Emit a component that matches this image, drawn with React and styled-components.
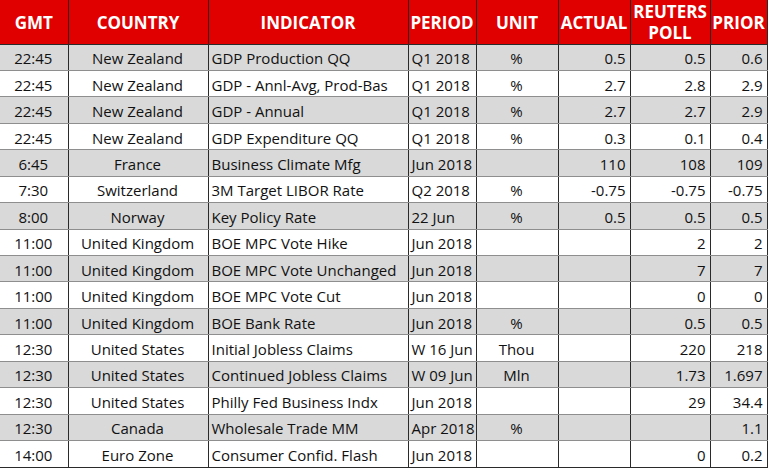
import React from 'react';
import styled, { createGlobalStyle } from 'styled-components';

const GlobalStyle = createGlobalStyle`
  html, body {
    margin: 0;
    padding: 0;
    background: #fff;
  }
`;

const columns = [
  { key: 'gmt', label: 'GMT', width: 68, align: 'center' },
  { key: 'country', label: 'COUNTRY', width: 140, align: 'center' },
  { key: 'indicator', label: 'INDICATOR', width: 200, align: 'left' },
  { key: 'period', label: 'PERIOD', width: 68, align: 'left' },
  { key: 'unit', label: 'UNIT', width: 82, align: 'center' },
  { key: 'actual', label: 'ACTUAL', width: 72, align: 'right' },
  { key: 'poll', label: ['REUTERS', 'POLL'], width: 80, align: 'right' },
  { key: 'prior', label: 'PRIOR', width: 57, align: 'right' },
];

const rows = [
  ['22:45', 'New Zealand', 'GDP Production QQ', 'Q1 2018', '%', '0.5', '0.5', '0.6'],
  ['22:45', 'New Zealand', 'GDP - Annl-Avg, Prod-Bas', 'Q1 2018', '%', '2.7', '2.8', '2.9'],
  ['22:45', 'New Zealand', 'GDP - Annual', 'Q1 2018', '%', '2.7', '2.7', '2.9'],
  ['22:45', 'New Zealand', 'GDP Expenditure QQ', 'Q1 2018', '%', '0.3', '0.1', '0.4'],
  ['6:45', 'France', 'Business Climate Mfg', 'Jun 2018', '', '110', '108', '109'],
  ['7:30', 'Switzerland', '3M Target LIBOR Rate', 'Q2 2018', '%', '-0.75', '-0.75', '-0.75'],
  ['8:00', 'Norway', 'Key Policy Rate', '22 Jun', '%', '0.5', '0.5', '0.5'],
  ['11:00', 'United Kingdom', 'BOE MPC Vote Hike', 'Jun 2018', '', '', '2', '2'],
  ['11:00', 'United Kingdom', 'BOE MPC Vote Unchanged', 'Jun 2018', '', '', '7', '7'],
  ['11:00', 'United Kingdom', 'BOE MPC Vote Cut', 'Jun 2018', '', '', '0', '0'],
  ['11:00', 'United Kingdom', 'BOE Bank Rate', 'Jun 2018', '%', '', '0.5', '0.5'],
  ['12:30', 'United States', 'Initial Jobless Claims', 'W 16 Jun', 'Thou', '', '220', '218'],
  ['12:30', 'United States', 'Continued Jobless Claims', 'W 09 Jun', 'Mln', '', '1.73', '1.697'],
  ['12:30', 'United States', 'Philly Fed Business Indx', 'Jun 2018', '', '', '29', '34.4'],
  ['12:30', 'Canada', 'Wholesale Trade MM', 'Apr 2018', '%', '', '', '1.1'],
  ['14:00', 'Euro Zone', 'Consumer Confid. Flash', 'Jun 2018', '', '', '0', '0.2'],
];

class App extends React.Component {
  render() {
    return (
      <Page>
        <GlobalStyle />
        <Table>
          <colgroup>
            {columns.map(col => <col key={col.key} style={{ width: col.width }} />)}
          </colgroup>
          <thead>
            <HeadRow>
              {columns.map(col => (
                <HeadCell key={col.key}>
                  {Array.isArray(col.label)
                    ? col.label.map(l => <HeadLine key={l}>{l}</HeadLine>)
                    : col.label}
                </HeadCell>
              ))}
            </HeadRow>
          </thead>
          <tbody>
            {rows.map((row, r) => (
              <Row key={r} shaded={r % 2 === 0} lastRow={r === rows.length - 1}>
                {row.map((val, i) => (
                  <Cell key={i} align={columns[i].align}>
                    {val}
                  </Cell>
                ))}
              </Row>
            ))}
          </tbody>
        </Table>
      </Page>
    );
  }
}

const Page = styled.div`
  width: 768px;
  height: 469px;
  overflow: hidden;
  background: #fff;
`;
Page.displayName = 'Page';

const Table = styled.table`
  border-collapse: collapse;
  table-layout: fixed;
  width: 767px;
  font-family: "Open Sans", "Liberation Sans", sans-serif;
`;
Table.displayName = 'Table';

const HeadRow = styled.tr`
  height: 44px;
  background: #e10000;
`;
HeadRow.displayName = 'HeadRow';

const HeadCell = styled.th`
  padding: 1px 0 0 0;
  color: #fff;
  font-weight: 700;
  font-size: 17px;
  line-height: 21px;
  text-align: center;
  vertical-align: middle;
  border-right: 1px solid #2a2a2a;
  border-bottom: 1px solid #2a2a2a;
  white-space: nowrap;
`;
HeadCell.displayName = 'HeadCell';

const HeadLine = styled.div`
  display: block;
`;
HeadLine.displayName = 'HeadLine';

const Row = styled.tr`
  height: 26.45px;
  background: ${props => props.shaded ? '#d9d9d9' : '#fff'};
  td {
    border-bottom: 1px solid ${props => props.lastRow ? '#2a2a2a' : '#8e8e8e'};
  }
`;
Row.displayName = 'Row';

const Cell = styled.td`
  padding: 2px 4px 0 3px;
  color: #111;
  font-size: 15px;
  line-height: 20px;
  white-space: nowrap;
  overflow: hidden;
  text-align: ${props => props.align};
  border-right: 1px solid #2a2a2a;
`;
Cell.displayName = 'Cell';

export default App;
